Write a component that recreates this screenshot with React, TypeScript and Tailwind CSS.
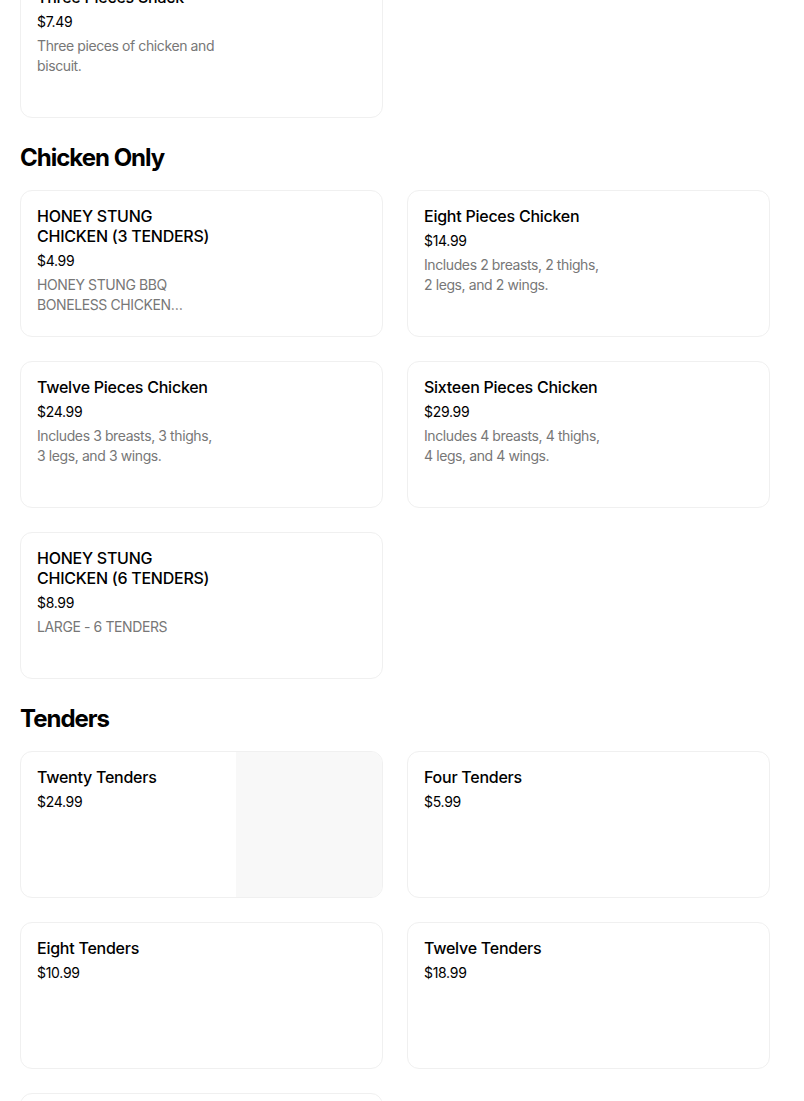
import React from "react";

type Item = { title: string; price: string; desc?: string; image?: boolean };

const Card = ({ item }: { item?: Item }) => (
  <div className="flex h-[147px] overflow-hidden rounded-xl border border-[#f0f0f0] bg-white">
    {item ? (
      <>
        <div className="flex-1 min-w-0 pl-4 pt-[15px] pr-4">
          <div className="w-[181px]">
            <div className="text-[16px] leading-5 font-medium tracking-[-0.25px] text-black">{item.title}</div>
            <div className="mt-[5px] text-[14px] leading-5 tracking-[-0.3px] text-black">{item.price}</div>
            {item.desc && (
              <div className="mt-1 text-[14px] leading-5 tracking-[-0.4px] text-[#777777] line-clamp-2">{item.desc}</div>
            )}
          </div>
        </div>
        {item.image && <div className="w-[146px] shrink-0 bg-[#f8f8f8]" />}
      </>
    ) : null}
  </div>
);

const Section = ({ title, items }: { title: string; items: (Item | undefined)[] }) => (
  <div className="mt-6">
    <h2 className="mb-4 text-[24px] leading-8 font-bold tracking-[-1px] text-black">{title}</h2>
    <div className="grid grid-cols-2 gap-6">
      {items.map((it, i) => (
        <Card key={i} item={it} />
      ))}
    </div>
  </div>
);

export default function App() {
  return (
    <div
      className="h-[1101px] overflow-hidden bg-white"
      style={{ fontFamily: "Inter, 'Noto Sans', sans-serif" }}
    >
      <div className="ml-[20px] w-[750px] -mt-[29px]">
        <div className="grid grid-cols-2 gap-6">
          <Card
            item={{
              title: "Three Pieces Snack",
              price: "$7.49",
              desc: "Three pieces of chicken and biscuit.",
            }}
          />
        </div>
        <Section
          title="Chicken Only"
          items={[
            {
              title: "HONEY STUNG CHICKEN (3 TENDERS)",
              price: "$4.99",
              desc: "HONEY STUNG BBQ BONELESS CHICKEN TENDERS WITH A SWEET AND SMOKY GLAZE",
            },
            {
              title: "Eight Pieces Chicken",
              price: "$14.99",
              desc: "Includes 2 breasts, 2 thighs, 2 legs, and 2 wings.",
            },
            {
              title: "Twelve Pieces Chicken",
              price: "$24.99",
              desc: "Includes 3 breasts, 3 thighs, 3 legs, and 3 wings.",
            },
            {
              title: "Sixteen Pieces Chicken",
              price: "$29.99",
              desc: "Includes 4 breasts, 4 thighs, 4 legs, and 4 wings.",
            },
            {
              title: "HONEY STUNG CHICKEN (6 TENDERS)",
              price: "$8.99",
              desc: "LARGE - 6 TENDERS",
            },
          ]}
        />
        <Section
          title="Tenders"
          items={[
            { title: "Twenty Tenders", price: "$24.99", image: true },
            { title: "Four Tenders", price: "$5.99" },
            { title: "Eight Tenders", price: "$10.99" },
            { title: "Twelve Tenders", price: "$18.99" },
            { title: "Sixteen Tenders", price: "$22.99" },
          ]}
        />
      </div>
    </div>
  );
}
